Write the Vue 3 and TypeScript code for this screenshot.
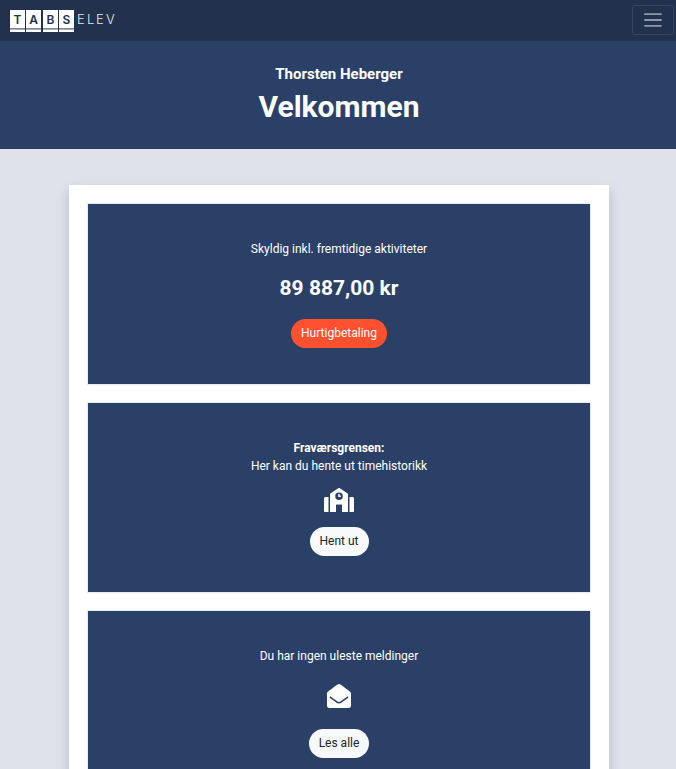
<script setup lang="ts">
interface Tile {
  letter: string
  x: number
}

const tiles: Tile[] = [
  { letter: 'T', x: 0 },
  { letter: 'A', x: 16 },
  { letter: 'B', x: 33 },
  { letter: 'S', x: 49 },
]
</script>

<template>
  <div class="page">
    <nav class="navbar">
      <a class="brand" href="#" aria-label="TABS Elev">
        <svg width="108" height="24" viewBox="0 0 108 24">
          <g v-for="tile in tiles" :key="tile.letter">
            <rect :x="tile.x" y="0" width="15" height="18" fill="#fff" />
            <rect :x="tile.x" y="18" width="15" height="1.5" fill="#7d879b" />
            <rect :x="tile.x" y="19.5" width="15" height="2.5" fill="#fff" />
            <text class="tile-letter" :x="tile.x + 7.5" y="14" text-anchor="middle">{{ tile.letter }}</text>
          </g>
          <text class="suffix" x="67 77 86 96" y="14">ELEV</text>
        </svg>
      </a>
      <button class="toggler" type="button" aria-label="Meny">
        <svg width="22" height="22" viewBox="0 0 30 30">
          <path d="M4 7h22M4 15h22M4 23h22" stroke="#8f98a8" stroke-width="2.4" stroke-linecap="round" />
        </svg>
      </button>
    </nav>

    <header class="hero">
      <p class="name">Thorsten Heberger</p>
      <h1>Velkommen</h1>
    </header>

    <main class="content">
      <div class="panel">
        <section class="card">
          <p>Skyldig inkl. fremtidige aktiviteter</p>
          <p class="amount">89 887,00 kr</p>
          <button class="pill pay" type="button">Hurtigbetaling</button>
        </section>

        <section class="card">
          <p><strong>Fraværsgrensen:</strong><br />Her kan du hente ut timehistorikk</p>
          <svg class="school" width="30" height="24" viewBox="0 0 640 512" fill="#fff">
            <path fill-rule="evenodd" d="M0 224v272c0 9 7 16 16 16h80V192H32c-18 0-32 14-32 32zM497 112L338 5a32 32 0 0 0-36 0L143 112a32 32 0 0 0-15 26v374h128V368c0-9 7-16 16-16h96c9 0 16 7 16 16v144h128V138c0-10-5-20-15-26zM320 256a80 80 0 1 1 0-160 80 80 0 0 1 0 160zM608 192h-64v320h80c9 0 16-7 16-16V224c0-18-14-32-32-32z" />
            <path d="M304 136c0-4 4-8 8-8h16c4 0 8 4 8 8v24h16c4 0 8 4 8 8v16c0 4-4 8-8 8h-40c-4 0-8-4-8-8z" />
          </svg>
          <button class="pill" type="button">Hent ut</button>
        </section>

        <section class="card">
          <p>Du har ingen uleste meldinger</p>
          <svg class="mail" width="24" height="24" viewBox="0 0 512 512" fill="#fff">
            <path d="M512 464c0 26.500-21.500 48-48 48H48c-26.500 0-48-21.500-48-48V200.700a48 48 0 0 1 17.400-37C41.700 144 62.800 126.600 202.600 25 215 16 238.800-.3 256 0c17.200-.3 41.100 16 53.400 25 139.800 101.600 160.900 119 185.200 138.700a48 48 0 0 1 17.400 37V464zm-65.700-196.600c-2.600-3.800-7.800-4.700-11.500-2-22.900 16.600-55.500 40.200-105.400 76.500-16.800 12.300-50.200 41.800-73.400 41.400-23.200.4-56.600-29.200-73.400-41.400-49.900-36.200-82.500-59.900-105.400-76.500-3.700-2.700-8.900-1.800-11.500 2l-9.100 13.200a8 8 0 0 0 1.900 11c22.900 16.600 55.400 40.200 105.200 76.400 20.600 15 57.200 47.900 92.300 47.600 35.100.3 71.700-32.600 92.300-47.600 49.800-36.200 82.300-59.800 105.200-76.400a8 8 0 0 0 1.900-11l-9.100-13.200z" />
          </svg>
          <button class="pill" type="button">Les alle</button>
        </section>
      </div>
    </main>
  </div>
</template>

<style>
body {
  margin: 0;
  background: #dfe2ea;
}
</style>

<style scoped>
.page {
  font-family: Roboto, 'Liberation Sans', sans-serif;
  font-size: 12px;
  line-height: 18px;
  color: #fff;
}

.navbar {
  display: flex;
  align-items: center;
  justify-content: space-between;
  box-sizing: border-box;
  height: 41px;
  padding: 0 2px 1px 10px;
  background: #22314e;
}

.brand {
  display: flex;
  padding-top: 4px;
}

.tile-letter {
  font: 600 12px Inter, sans-serif;
  fill: #22314e;
}

.suffix {
  font: 300 13px Inter, sans-serif;
  fill: #e6e9ef;
}

.toggler {
  display: flex;
  align-items: center;
  justify-content: center;
  width: 42px;
  height: 30px;
  padding: 0;
  border: 1px solid #384560;
  border-radius: 3px;
  background: transparent;
}

.hero {
  padding: 23px 0 22px 2px;
  background: #2b4066;
  text-align: center;
}

p,
h1 {
  margin: 0;
}

.name {
  font-size: 15px;
  font-weight: 700;
  line-height: 20px;
}

h1 {
  padding-top: 3px;
  font-size: 30px;
  font-weight: 700;
  line-height: 40px;
}

.content {
  padding: 36px 0 36px 2px;
}

.panel {
  display: flex;
  flex-direction: column;
  gap: 19px;
  box-sizing: border-box;
  max-width: 540px;
  margin: 0 auto;
  padding: 19px;
  background: #fff;
  box-shadow: 0 6px 12px rgba(0, 0, 0, 0.18);
}

.card {
  display: flex;
  flex-direction: column;
  align-items: center;
  padding: 36px 20px;
  background: #2b4066;
  box-shadow: 0 0 1px 1px rgba(43, 64, 102, 0.1);
  text-align: center;
}

.amount {
  padding: 16px 0 17px;
  font-size: 21px;
  font-weight: 700;
  line-height: 28px;
}

.pill {
  height: 29px;
  padding: 0 10px 2px;
  border: 0;
  border-radius: 15px;
  background: #f8f9fa;
  color: #212529;
  font: inherit;
}

.pay {
  background: #ff512f;
  color: #fff;
}

.school {
  margin: 13px 0 15px;
}

.mail {
  margin: 19px 0 21px;
}
</style>
